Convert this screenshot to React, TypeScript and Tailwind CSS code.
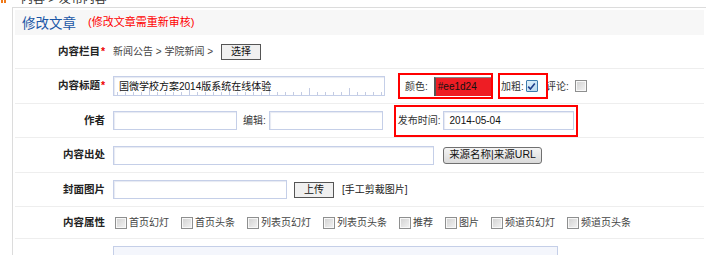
import React from "react";

const Box = ({ className = "", children }: { className?: string; children?: React.ReactNode }) => (
  <div
    className={`h-[19px] border border-[#c5cfe8] bg-white shadow-[inset_1px_1px_1px_#e6e9f2] flex items-center px-[5px] text-[10px] text-[#111] ${className}`}
  >
    {children}
  </div>
);

const Check = ({ on = false }: { on?: boolean }) =>
  on ? (
    <span className="block shrink-0 w-[12px] h-[12px] border border-[#3d7bad] rounded-[1px] bg-gradient-to-br from-[#dff0fb] to-[#b8d9f0] flex items-center justify-center">
      <svg width="9" height="9" viewBox="0 0 9 9">
        <path d="M1.2 4.6 L3.4 7 L7.8 1.4" fill="none" stroke="#1f3f8a" strokeWidth="1.6" />
      </svg>
    </span>
  ) : (
    <span className="block shrink-0 w-[12px] h-[12px] border border-[#8e8f8f] bg-gradient-to-br from-[#d0d0d0] to-[#f4f4f4] shadow-[inset_0_0_0_1px_#f8f8f8]" />
  );

const Row = ({ label, star, className = "", children }: { label: string; star?: boolean; className?: string; children?: React.ReactNode }) => (
  <div className={`flex items-center border-b border-[#eeeeee] ${className}`}>
    <div className="w-[90px] text-right font-bold text-[10.5px] text-[#222]">
      {label}
      {star && <span className="text-[#e00] ml-[1px]">*</span>}
    </div>
    <div className="flex items-center ml-[8px] text-[10px] text-[#333]">{children}</div>
  </div>
);

const attrs = ["首页幻灯", "首页头条", "列表页幻灯", "列表页头条", "推荐", "图片", "频道页幻灯", "频道页头条"];

export default function App() {
  return (
    <div className="w-[706px] h-[255px] overflow-hidden bg-white font-['Liberation_Sans','Noto_Sans_CJK_SC',sans-serif]">
      <div className="h-[16px] -mt-[9px] flex items-center">
        <span className="ml-[1px] flex gap-[1px]">
          <span className="w-[2px] h-[7px] bg-[#f07a1a]" />
          <span className="w-[2px] h-[7px] bg-[#f07a1a]" />
        </span>
        <span className="ml-[15px] text-[12px] text-[#333]">内容 &gt; 发布内容</span>
      </div>

      <div className="ml-[12px] border-l border-t border-[#dcdcdc] px-[2px] pt-[2px]">
        <div className="h-[25px] bg-[#f7f7f7] flex items-center pl-[7px]">
          <span className="text-[13.5px] text-[#1a56a6] font-['Noto_Sans_CJK_SC',sans-serif]">修改文章</span>
          <span className="ml-[12px] text-[11px] text-[#f00]">(修改文章需重新审核)</span>
        </div>

        <Row label="内容栏目" star className="h-[34px]">
          <span className="text-[#444]">新闻公告 &gt; 学院新闻 &gt;</span>
          <span className="ml-[8px] w-[40px] h-[16px] border border-[#555] bg-[#f0f0f0] flex items-center justify-center text-[#111]">
            选择
          </span>
        </Row>

        <Row label="内容标题" star className="h-[35px]">
          <Box className="w-[272px] h-[20px] bg-[linear-gradient(to_right,#c3cbe3_1px,transparent_1px),linear-gradient(to_right,#c3cbe3_1px,transparent_1px)] bg-[length:8px_3px,40px_7px] bg-bottom bg-repeat-x">
            国微学校方案2014版系统在线体验
          </Box>
          <div className="ml-[13px] h-[26px] w-[95px] border-2 border-[#f00] flex items-center pl-[5px]">
            <span>颜色:</span>
            <span className="ml-[6px] w-[57px] h-[19px] bg-[#ee1d24] border-l-2 border-t border-l-[#555] border-t-[#888] flex items-center pl-[2px] text-[#111]">
              #ee1d24
            </span>
          </div>
          <div className="relative z-10 ml-[5px] h-[26px] w-[50px] border-2 border-[#f00] flex items-center pl-[1px]">
            <span>加粗:</span>
            <span className="ml-[2px]">
              <Check on />
            </span>
          </div>
          <span className="-ml-[2px]">评论:</span>
          <span className="ml-[6px]">
            <Check />
          </span>
        </Row>

        <Row label="作者" className="h-[34px]">
          <Box className="w-[124px]" />
          <span className="ml-[6px]">编辑:</span>
          <Box className="ml-[3px] w-[114px]" />
          <div className="ml-[11px] h-[32px] w-[184px] border-2 border-[#f00] flex items-center pl-[2px]">
            <span>发布时间:</span>
            <Box className="ml-[2px] w-[131px] pl-[6px]">2014-05-04</Box>
          </div>
        </Row>

        <Row label="内容出处" className="h-[35px]">
          <Box className="w-[321px]" />
          <span className="ml-[9px] w-[99px] h-[17px] rounded-[3px] border border-[#707070] bg-gradient-to-b from-[#f4f4f4] to-[#dadada] flex items-center justify-center text-[10.5px] text-[#111]">
            来源名称|来源URL
          </span>
        </Row>

        <Row label="封面图片" className="h-[34px]">
          <Box className="w-[174px]" />
          <span className="ml-[7px] w-[40px] h-[16px] border border-[#555] bg-[#f0f0f0] flex items-center justify-center text-[#111]">
            上传
          </span>
          <span className="ml-[8px] text-[#222]">[手工剪裁图片]</span>
        </Row>

        <Row label="内容属性" className="h-[32px]">
          <div className="flex items-center gap-[12px] ml-[2px]">
            {attrs.map((a) => (
              <span key={a} className="flex items-center gap-[2px] text-[#444]">
                <Check />
                {a}
              </span>
            ))}
          </div>
        </Row>

        <div className="flex pt-[7px]">
          <div className="ml-[98px] w-[445px] h-[20px] border border-[#c5cfe8] bg-[#f4f6fc]" />
        </div>
      </div>
    </div>
  );
}
